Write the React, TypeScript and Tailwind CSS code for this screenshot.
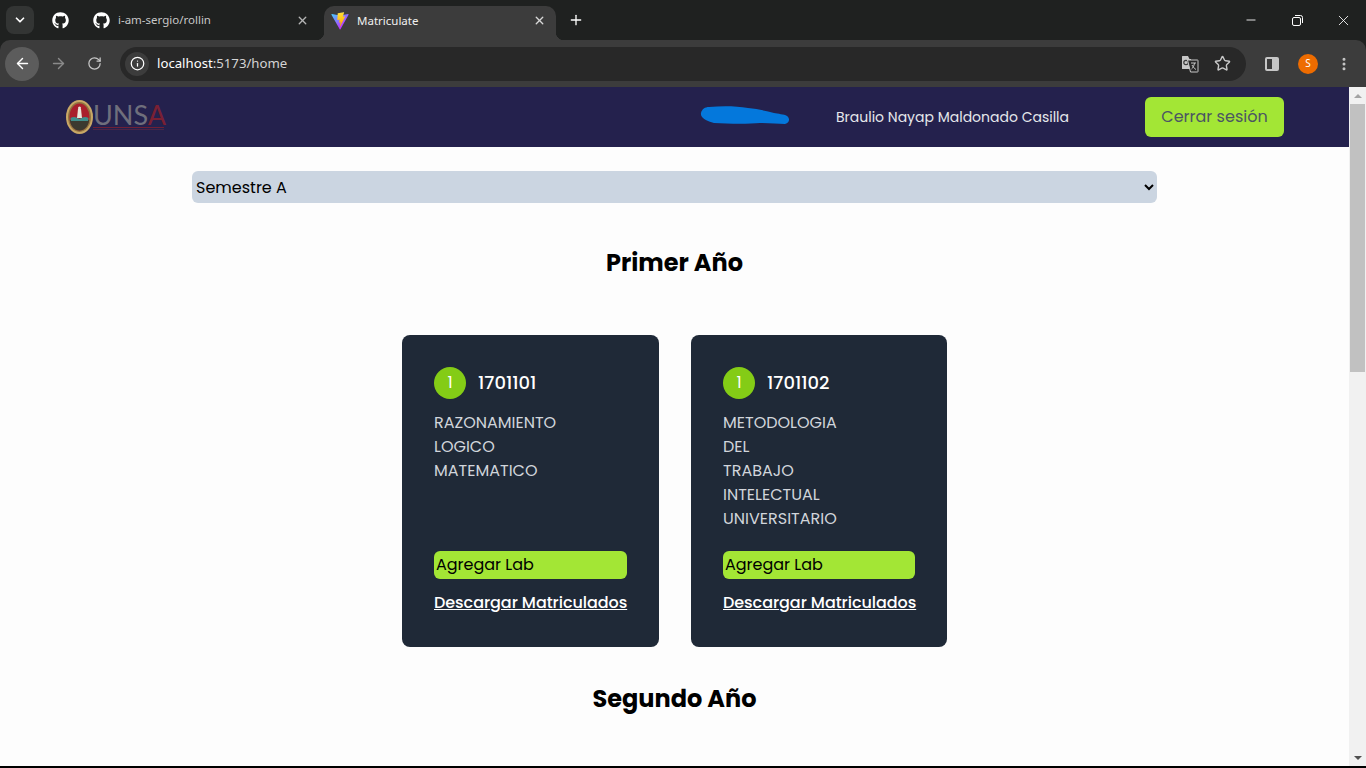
import React from "react";
import { ArrowLeft, ArrowRight, ChevronDown, Info, Minus, MoreVertical, Plus, RotateCw, Star, X } from "lucide-react";
import { FaGithub } from "react-icons/fa";

const courses = [
  { code: "1701101", lines: ["RAZONAMIENTO", "LOGICO", "MATEMATICO"], width: "w-[257px]" },
  { code: "1701102", lines: ["METODOLOGIA", "DEL", "TRABAJO", "INTELECTUAL", "UNIVERSITARIO"], width: "w-[256px]" },
];

function ViteLogo() {
  return (
    <svg width="18" height="18" viewBox="0 0 410 404">
      <defs>
        <linearGradient id="vite-a" x1="6" y1="33" x2="235" y2="344" gradientUnits="userSpaceOnUse">
          <stop stopColor="#41D1FF" />
          <stop offset="1" stopColor="#BD34FE" />
        </linearGradient>
        <linearGradient id="vite-b" x1="194" y1="8" x2="236" y2="292" gradientUnits="userSpaceOnUse">
          <stop stopColor="#FFEA83" />
          <stop offset="0.08" stopColor="#FFDD35" />
          <stop offset="1" stopColor="#FFA800" />
        </linearGradient>
      </defs>
      <path
        d="M399.641 59.5246L215.643 388.545C211.844 395.338 202.084 395.378 198.228 388.618L10.5817 59.5563C6.38087 52.1896 12.6802 43.2665 21.0281 44.7586L205.223 77.6824C206.398 77.8924 207.601 77.8904 208.776 77.6763L389.119 44.8058C397.439 43.2894 403.768 52.1434 399.641 59.5246Z"
        fill="url(#vite-a)"
      />
      <path
        d="M292.965 1.5744L156.801 28.2552C154.563 28.6937 152.906 30.5903 152.771 32.8664L144.395 174.33C144.198 177.662 147.258 180.248 150.51 179.498L188.42 170.749C191.967 169.931 195.172 173.055 194.443 176.622L183.18 231.775C182.422 235.487 185.907 238.661 189.532 237.56L212.947 230.446C216.577 229.344 220.065 232.527 219.297 236.242L201.398 322.875C200.278 328.294 207.486 331.249 210.492 326.603L212.5 323.5L323.454 102.072C325.312 98.3645 322.108 94.137 318.036 94.9228L279.014 102.454C275.347 103.161 272.227 99.746 273.262 96.1583L298.731 7.86689C299.767 4.27314 296.636 0.855181 292.965 1.5744Z"
        fill="url(#vite-b)"
      />
    </svg>
  );
}

function TranslateIcon() {
  return (
    <svg width="18" height="18" viewBox="0 0 18 18">
      <path d="M1 1.5 Q1 1 1.5 1 H7 L8.5 4 H10 V14 H1.5 Q1 14 1 13.5 Z" fill="#c7c7c7" />
      <circle cx="5" cy="7.5" r="2.2" fill="none" stroke="#3a3a3a" strokeWidth="1.2" />
      <path d="M6.5 5 H16.5 Q17 5 17 5.5 V16.5 Q17 17 16.5 17 H9.5 Z" fill="#282828" stroke="#c7c7c7" strokeWidth="1" />
      <path d="M10 8 H15 M13.5 8 C13 11 12 13 10.5 14 M11 10 C12 12 13.5 13.5 15 14.5" stroke="#c7c7c7" strokeWidth="1" fill="none" />
    </svg>
  );
}

function Browser() {
  return (
    <div className="shrink-0 bg-[#1f2120] font-['Noto_Sans','Roboto',sans-serif]">
      {/* Tabs */}
      <div className="h-10 flex items-start text-[#c7c7c7] text-[11.5px]">
        <div className="ml-[6px] mt-[6px] w-7 h-7 rounded-lg bg-[#333534] flex items-center justify-center">
          <ChevronDown size={14} strokeWidth={3} className="text-white" />
        </div>
        <div className="w-[52px] h-10 flex items-center justify-center">
          <FaGithub size={17} className="text-white" />
        </div>
        <div className="w-[238px] h-10 flex items-center pl-[7px] pr-[15px]">
          <FaGithub size={17} className="text-white shrink-0" />
          <span className="ml-2 flex-1">i-am-sergio/rollin</span>
          <X size={13} strokeWidth={2.5} className="text-[#b5b5b5]" />
        </div>
        <div className="relative mt-[6px] w-[232px] h-[34px] bg-[#3c3c3c] rounded-t-[10px] flex items-center pl-[7px] pr-[10px] pb-[5px] text-[#f0f0f0]">
          <div className="absolute left-[-8px] bottom-0 w-2 h-2 bg-[radial-gradient(circle_at_0_0,#1f2120_8px,#3c3c3c_8.5px)]" />
          <div className="absolute right-[-8px] bottom-0 w-2 h-2 bg-[radial-gradient(circle_at_100%_0,#1f2120_8px,#3c3c3c_8.5px)]" />
          <ViteLogo />
          <span className="ml-2 flex-1">Matriculate</span>
          <X size={13} strokeWidth={2.5} className="text-[#d8d8d8]" />
        </div>
        <div className="ml-[6px] w-7 h-10 flex items-center justify-center">
          <Plus size={16} strokeWidth={2} className="text-white" />
        </div>
        <div className="ml-auto h-10 flex items-center text-white">
          <div className="w-[46px] flex justify-center">
            <Minus size={14} strokeWidth={1.5} />
          </div>
          <div className="w-[46px] flex justify-center">
            <svg width="11" height="11" viewBox="0 0 11 11" fill="none" stroke="white">
              <rect x="0.5" y="2.5" width="8" height="8" rx="1.5" />
              <path d="M3 0.5 H8.5 A2 2 0 0 1 10.5 2.5 V8" />
            </svg>
          </div>
          <div className="w-[46px] flex justify-center">
            <X size={17} strokeWidth={1.2} />
          </div>
        </div>
      </div>
      {/* Toolbar */}
      <div className="h-[47px] bg-[#3c3c3c] rounded-t-[10px] flex items-center pl-[5px] pr-[14px] text-[#c7c7c7]">
        <div className="w-[34px] h-[34px] rounded-full bg-[#5c5c5c] flex items-center justify-center">
          <ArrowLeft size={17} strokeWidth={2} className="text-white" />
        </div>
        <div className="w-[38px] flex justify-center">
          <ArrowRight size={17} strokeWidth={2} className="text-[#8a8a8a]" />
        </div>
        <div className="w-[34px] flex justify-center">
          <RotateCw size={15} strokeWidth={2} />
        </div>
        <div className="ml-[9px] w-[1126px] h-[34px] rounded-full bg-[#282828] flex items-center pl-[5px] pr-[15px]">
          <div className="w-6 h-6 rounded-full bg-[#3c3c3c] flex items-center justify-center">
            <Info size={15} strokeWidth={2} className="text-white" />
          </div>
          <span className="ml-2 text-[13.2px] text-white">
            localhost<span className="text-[#d4d4d4]">:5173/home</span>
          </span>
          <div className="ml-auto flex items-center gap-[15px]">
            <TranslateIcon />
            <Star size={17} strokeWidth={2} />
          </div>
        </div>
        <div className="ml-auto flex items-center">
          <div className="w-[14px] h-[14px] rounded-[2px] border-2 border-[#c7c7c7] mr-[19px] flex justify-end">
            <div className="w-[5px] bg-[#c7c7c7]" />
          </div>
          <div className="w-5 h-5 rounded-full bg-[#ee6c00] text-white text-[10px] flex items-center justify-center mr-[18px]">S</div>
          <MoreVertical size={16} strokeWidth={2.5} />
        </div>
      </div>
    </div>
  );
}

function Seal() {
  return (
    <svg width="27" height="34" viewBox="0 0 27 34">
      <ellipse cx="13.5" cy="17" rx="13.5" ry="17" fill="#c9a866" />
      <ellipse cx="13.5" cy="17" rx="11.5" ry="15" fill="#8f7440" />
      <ellipse cx="13.5" cy="17" rx="10" ry="13.5" fill="#a91f2c" />
      <path d="M3.8 20 H23.2 C22.5 26 18.5 30.5 13.5 30.5 C8.5 30.5 4.5 26 3.8 20 Z" fill="#3b3a30" />
      <path d="M4.5 18 C8 16 10 17 13.5 19 C17 17 19 16 22.5 18 L22 21 H5 Z" fill="#3f8f8c" />
      <path d="M12 9 H15 L16 18 H11 Z" fill="#e9e6da" />
      <circle cx="13.5" cy="8" r="1.5" fill="#e9e6da" />
    </svg>
  );
}

function Logo() {
  return (
    <div className="flex items-center mt-[-1px]">
      <Seal />
      <div className="relative h-[34px] w-[71px] font-['Lato',sans-serif] text-[27px] leading-[30px] text-[#6f6f7c] whitespace-nowrap">
        UNS<span className="text-[#7a2033]">A</span>
        <div className="absolute left-0 right-0 bottom-[6px] h-px bg-[#6e2036]" />
        <div className="absolute left-0 right-0 bottom-[4px] h-px bg-[#4a2547]" />
      </div>
    </div>
  );
}

function BlueScribble() {
  return (
    <svg width="90" height="19" viewBox="0 0 90 19" className="block">
      <path
        d="M1 7 C2 3 5 1 9 1 C22 0 36 0 48 2 C58 3 66 5 74 7 C78 8 84 8 87 10 C90 12 90 17 85 18 C78 18 70 17 60 17 C50 18 30 18 14 17 C7 15 0 12 1 7 Z"
        fill="#0478dc"
      />
    </svg>
  );
}

function Navbar() {
  return (
    <nav className="h-[60px] bg-[#24214d] flex items-center pl-[66px] pr-[65px] shrink-0">
      <Logo />
      <div className="ml-auto mt-[-4px]">
        <BlueScribble />
      </div>
      <span className="ml-[46px] w-[233px] text-sm text-[#e5e7eb] whitespace-nowrap">Braulio Nayap Maldonado Casilla</span>
      <button className="ml-[76px] w-[139px] h-10 rounded-md bg-[#a3e635] text-[#4b5563] text-base">Cerrar sesión</button>
    </nav>
  );
}

function CourseCard({ code, lines, width }: { code: string; lines: string[]; width: string }) {
  return (
    <div className={`${width} h-[312px] rounded-lg bg-[#1f2937] p-8 flex flex-col`}>
      <div className="flex items-center gap-3">
        <div className="w-8 h-8 rounded-full bg-[#84cc16] text-white flex items-center justify-center text-base">1</div>
        <span className="text-white text-lg font-medium">{code}</span>
      </div>
      <div className="mt-3 text-[#d1d5db] text-base leading-6">
        {lines.map((line) => (
          <div key={line}>{line}</div>
        ))}
      </div>
      <div className="mt-auto h-7 rounded-md bg-[#a3e635] text-black text-base leading-7 px-[2px]">Agregar Lab</div>
      <a href="#" className="mt-3 text-white text-base leading-6 font-medium underline whitespace-nowrap tracking-[-0.05px]">Descargar Matriculados</a>
    </div>
  );
}

function Scrollbar() {
  return (
    <div className="w-[17px] bg-[#f1f1f1] flex flex-col items-center shrink-0">
      <div className="h-[17px] flex items-center justify-center">
        <div className="w-0 h-0 border-x-[4px] border-x-transparent border-b-[4px] border-b-[#a3a3a3]" />
      </div>
      <div className="w-[15px] h-[268px] bg-[#c1c1c1]" />
      <div className="mt-auto h-[17px] flex items-center justify-center">
        <div className="w-0 h-0 border-x-[4px] border-x-transparent border-t-[4px] border-t-[#505050]" />
      </div>
    </div>
  );
}

export default function App() {
  return (
    <div className="h-screen overflow-hidden flex flex-col bg-black font-['Poppins','Inter',sans-serif]">
      <Browser />
      <div className="h-[679px] flex shrink-0">
        <div className="flex-1 flex flex-col overflow-hidden bg-[#fdfdfd]">
          <Navbar />
          <main className="flex flex-col items-center pt-6">
            <select className="w-[965px] h-8 rounded-md bg-[#cbd5e1] text-black text-base">
              <option>Semestre A</option>
            </select>
            <h2 className="mt-11 text-2xl leading-8 font-bold text-black">Primer Año</h2>
            <div className="mt-14 flex gap-8">
              {courses.map((c) => (
                <CourseCard key={c.code} {...c} />
              ))}
            </div>
            <h2 className="mt-9 text-2xl leading-8 font-bold text-black">Segundo Año</h2>
          </main>
        </div>
        <Scrollbar />
      </div>
    </div>
  );
}
